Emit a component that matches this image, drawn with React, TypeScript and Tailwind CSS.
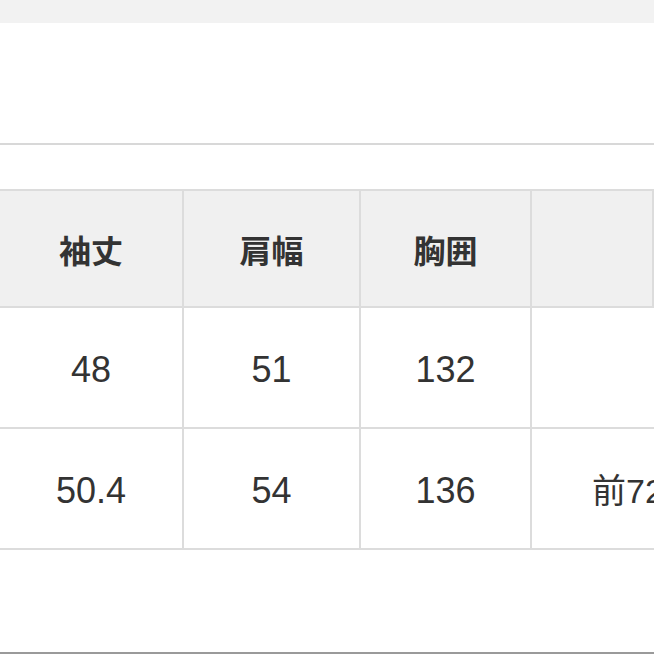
const header = ['袖丈', '肩幅', '胸囲', ''];
const rows = [
  ['48', '51', '132', ''],
  ['50.4', '54', '136', '前72 後75'],
];

const cols = 'grid grid-cols-[184px_177px_171px_1fr]';
const font = { cjk: "font-['Noto_Sans_CJK_JP',sans-serif]", num: "font-['Liberation_Sans','Noto_Sans_CJK_JP',sans-serif]" };

export default function App() {
  return (
    <div className="w-[654px] h-[654px] overflow-hidden bg-white flex flex-col">
      {/* top bar */}
      <div className="h-[23px] bg-[#f2f2f2]" />
      <div className="h-[120px]" />
      <div className="h-[2px] bg-[#d8d8d8]" />
      <div className="h-[44px]" />

      {/* size table */}
      <div className="border-t-2 border-[#dcdcdc]">
        <div className={`${cols} h-[117px] bg-[#f0f0f0] border-b-2 border-[#dcdcdc]`}>
          {header.map((h, i) => (
            <div key={i} className={`flex items-center justify-center border-r-2 border-[#dcdcdc] text-[32px] font-bold text-[#333] ${font.cjk}`}>
              {h}
            </div>
          ))}
        </div>
        {rows.map((r, ri) => (
          <div key={ri} className={`${cols} h-[121px] border-b-2 border-[#dcdcdc]`}>
            {r.map((c, i) =>
              i < 3 ? (
                <div key={i} className={`flex items-center justify-center pt-[5px] border-r-2 border-[#dcdcdc] text-[36px] text-[#333] ${font.num}`}>
                  {c}
                </div>
              ) : (
                <div key={i} className={`flex items-center pl-[60px] pt-[5px] overflow-hidden whitespace-nowrap text-[34px] text-[#333] ${font.num}`}>
                  {c}
                </div>
              )
            )}
          </div>
        ))}
      </div>

      <div className="flex-1" />
      <div className="h-[2px] bg-[#9a9a9a]" />
    </div>
  );
}
